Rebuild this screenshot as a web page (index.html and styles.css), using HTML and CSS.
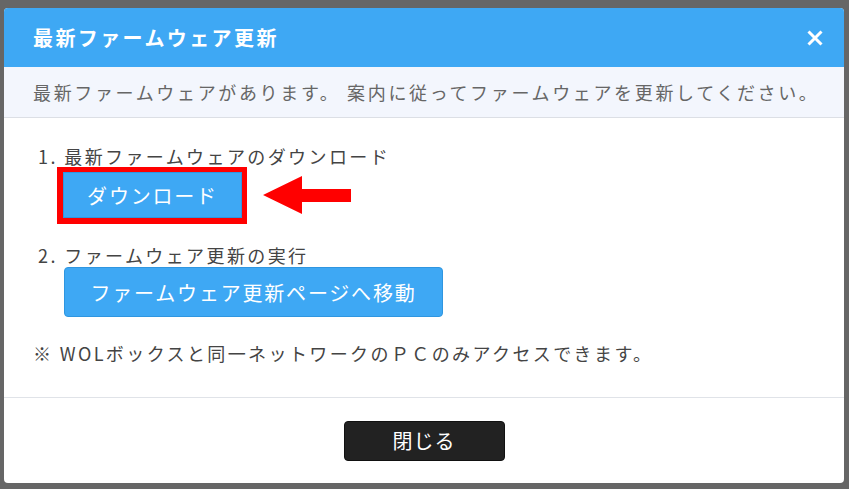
FILE: index.html
```html
<!DOCTYPE html>
<html lang="ja">
<head>
<meta charset="utf-8">
<link rel="stylesheet" href="styles.css">
</head>
<body>
<div class="dialog">
  <div class="dlg-header">
    <h1 class="dlg-title">最新ファームウェア更新</h1>
    <button class="dlg-close" aria-label="閉じる">
      <svg width="16" height="16" viewBox="0 0 16 16"><path d="M1.5 1.5L14.5 14.5M14.5 1.5L1.5 14.5" stroke="#fff" stroke-width="3" stroke-linecap="butt"/></svg>
    </button>
  </div>
  <div class="dlg-notice">最新ファームウェアがあります。 案内に従ってファームウェアを更新してください。</div>
  <div class="dlg-body">
    <div class="step">
      <div class="step-label">1. 最新ファームウェアのダウンロード</div>
      <div class="step-row">
        <span class="highlight"><button class="btn-blue btn-dl">ダウンロード</button></span>
        <svg class="arrow" width="90" height="40" viewBox="0 0 90 40"><polygon points="0,19 39,0 39,13 88,13 88,26 39,26 39,38" fill="#ff0000"/></svg>
      </div>
    </div>
    <div class="step step2">
      <div class="step-label">2. ファームウェア更新の実行</div>
      <button class="btn-blue btn-move">ファームウェア更新ページへ移動</button>
    </div>
    <p class="note">※ WOLボックスと同一ネットワークのＰＣのみアクセスできます。</p>
  </div>
  <div class="dlg-footer">
    <button class="btn-dark">閉じる</button>
  </div>
</div>
</body>
</html>
```
FILE: styles.css
```css
html, body {
  margin: 0;
  padding: 0;
}
body {
  background: #666666;
  padding: 8px 5px 6px 4px;
  font-family: "Noto Sans CJK JP", "Noto Sans", sans-serif;
}
.dialog {
  width: 840px;
  height: 475px;
  background: #fff;
  border-radius: 4px;
  overflow: hidden;
  display: flex;
  flex-direction: column;
}
.dlg-header {
  height: 59px;
  background: #3ea8f4;
  display: flex;
  align-items: center;
  justify-content: space-between;
  padding: 0 21px 0 29px;
  box-sizing: border-box;
}
.dlg-title {
  margin: 0;
  color: #fff;
  font-size: 20px;
  font-weight: bold;
  letter-spacing: 2.4px;
  line-height: 1;
}
.dlg-close {
  border: 0;
  background: none;
  padding: 0;
  width: 16px;
  height: 16px;
  display: flex;
}
.dlg-notice {
  height: 51px;
  box-sizing: border-box;
  background: #f3f6fd;
  border-bottom: 1px solid #dcdfe5;
  padding: 0 29px;
  display: flex;
  align-items: center;
  color: #666;
  font-size: 18px;
  letter-spacing: 2.65px;
  white-space: nowrap;
}
.dlg-body {
  height: 280px;
  box-sizing: border-box;
  border-bottom: 1px solid #e0e3e8;
  padding: 27px 29px 0 29px;
  color: #444;
  font-size: 18px;
  letter-spacing: 2.4px;
}
.step {
  padding-left: 5px;
}
.step-label {
  height: 22px;
  line-height: 22px;
  white-space: nowrap;
}
.step-row {
  display: flex;
  align-items: center;
  gap: 16px;
  margin-left: 19px;
}
.highlight {
  display: inline-flex;
  border: 5px solid #ff0000;
  border-bottom-width: 6px;
  border-right-width: 5px;
  border-left-width: 6px;
}
.btn-blue {
  background: #3ea8f4;
  color: #fff;
  border: 1px solid #2f96e0;
  font-family: inherit;
  font-size: 20px;
  letter-spacing: 1.8px;
  cursor: pointer;
}
.btn-dl {
  width: 179px;
  height: 46px;
  padding: 0;
  border-radius: 0;
}
.step2 {
  margin-top: 20px;
}
.step2 .step-label {
  height: 23px;
  line-height: 23px;
}
.btn-move {
  margin-left: 26px;
  height: 50px;
  width: 379px;
  padding: 0;
  border-radius: 4px;
}
.note {
  margin: 24px 0 0 0;
  height: 24px;
  line-height: 24px;
  white-space: nowrap;
}
.dlg-footer {
  flex: 1;
  display: flex;
  align-items: center;
  justify-content: center;
}
.btn-dark {
  width: 161px;
  height: 40px;
  background: #222;
  color: #fff;
  border: 1px solid #111;
  border-radius: 4px;
  font-family: inherit;
  font-size: 20px;
  letter-spacing: 1px;
}
```
